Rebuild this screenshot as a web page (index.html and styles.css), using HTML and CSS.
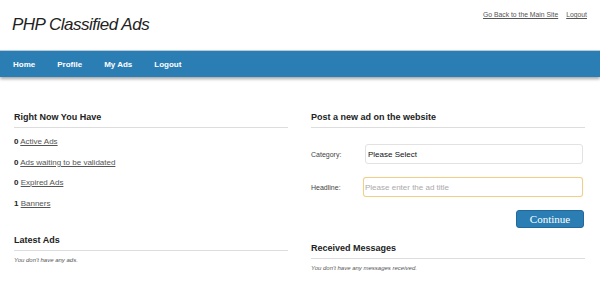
FILE: index.html
```html
<!DOCTYPE html>
<html lang="en">
<head>
    <meta charset="UTF-8">
    <title>PHP Classified Ads</title>
    <link rel="stylesheet" href="styles.css">
</head>
<body>
    <!-- Header -->
    <div class="header">
        <div class="logo">PHP Classified Ads</div>
        <div class="top-links">
            <a href="#">Go Back to the Main Site</a>
            <a href="#">Logout</a>
        </div>
    </div>

    <!-- Menu -->
    <div class="menu">
        <a href="#">Home</a>
        <a href="#">Profile</a>
        <a href="#">My Ads</a>
        <a href="#">Logout</a>
    </div>

    <div class="content">
        <div class="column">
            <h3 class="box-title">Right Now You Have</h3>
            <ul class="stats">
                <li><b>0</b> <a href="#">Active Ads</a></li>
                <li><b>0</b> <a href="#">Ads waiting to be validated</a></li>
                <li><b>0</b> <a href="#">Expired Ads</a></li>
                <li><b>1</b> <a href="#">Banners</a></li>
            </ul>

            <h3 class="box-title latest">Latest Ads</h3>
            <p class="note">You don't have any ads.</p>
        </div>

        <div class="column">
            <h3 class="box-title">Post a new ad on the website</h3>
            <form class="post-form">
                <div class="form-row">
                    <label for="category">Category:</label>
                    <select id="category" class="field select-field">
                        <option>Please Select</option>
                    </select>
                </div>
                <div class="form-row">
                    <label for="headline">Headline:</label>
                    <input type="text" id="headline" class="field input-field" placeholder="Please enter the ad title">
                </div>
                <div class="form-actions">
                    <button type="submit" class="button">Continue</button>
                </div>
            </form>

            <h3 class="box-title messages">Received Messages</h3>
            <p class="note">You don't have any messages received.</p>
        </div>
    </div>
</body>
</html>
```

FILE: styles.css
```css
body {
    font-family: "Liberation Sans", Arial, sans-serif;
    margin: 0;
    padding: 0;
    color: #222;
}

.header {
    height: 50px;
    display: flex;
    justify-content: space-between;
    padding: 0 13px 0 12px;
}

.logo {
    font-size: 17px;
    font-style: italic;
    letter-spacing: -0.5px;
    color: #222;
    margin-top: 15px;
}

.top-links {
    display: flex;
    gap: 8px;
    margin-top: 11px;
    font-size: 6.8px;
}

.top-links a {
    color: #555;
}

/* Menu */
.menu {
    height: 27px;
    background-color: #2a7eb4;
    border-top: 1px solid #b9cbd8;
    box-sizing: border-box;
    box-shadow: 0 2px 3px rgba(0, 0, 0, 0.35);
    display: flex;
    align-items: center;
    gap: 22px;
    padding-left: 13px;
}

.menu a {
    color: white;
    font-size: 8px;
    font-weight: bold;
    text-decoration: none;
}

/* Colunas */
.content {
    display: grid;
    grid-template-columns: 274px 274px;
    gap: 23px;
    padding: 34px 0 0 14px;
}

.box-title {
    margin: 0;
    font-size: 9px;
    line-height: 12px;
    padding-bottom: 4px;
    border-bottom: 1px solid #ddd;
    color: #222;
}

.stats {
    list-style: none;
    margin: 4px 0 0;
    padding: 0;
    font-size: 8px;
}

.stats li {
    line-height: 20.5px;
}

.stats a {
    color: #555;
}

.latest {
    margin-top: 20px;
}

.note {
    margin: 6px 0 0;
    font-size: 6px;
    font-style: italic;
    color: #555;
}

/* Formulario */
.post-form {
    margin-top: 16px;
    display: flex;
    flex-direction: column;
    gap: 13px;
}

.form-row {
    display: flex;
    align-items: center;
}

.form-row label {
    width: 52px;
    font-size: 7px;
    color: #444;
}

.field {
    box-sizing: border-box;
    height: 20px;
    width: 220px;
    margin: 0;
    font-family: "Liberation Sans", Arial, sans-serif;
    font-size: 8px;
    border-radius: 3px;
    background: white;
}

.select-field {
    appearance: none;
    -webkit-appearance: none;
    width: 218px;
    margin-left: 2px;
    border: 1px solid #e2e2e2;
    padding: 0 2px;
    color: #111;
}

.input-field {
    border: 1px solid #f0cf8c;
    box-shadow: 0 0 1px #f5dca8;
    padding: 0 1px;
    outline: none;
}

.input-field::placeholder {
    color: #aaa;
}

.form-actions {
    display: flex;
    justify-content: flex-end;
    padding-right: 1px;
}

.button {
    width: 68px;
    height: 18px;
    background-color: #2a7eb4;
    border: 1px solid #22689a;
    border-radius: 3px;
    color: white;
    font-family: "Liberation Serif", "Times New Roman", serif;
    font-size: 11px;
    padding: 0;
    cursor: pointer;
}

.messages {
    margin-top: 14px;
}
```
